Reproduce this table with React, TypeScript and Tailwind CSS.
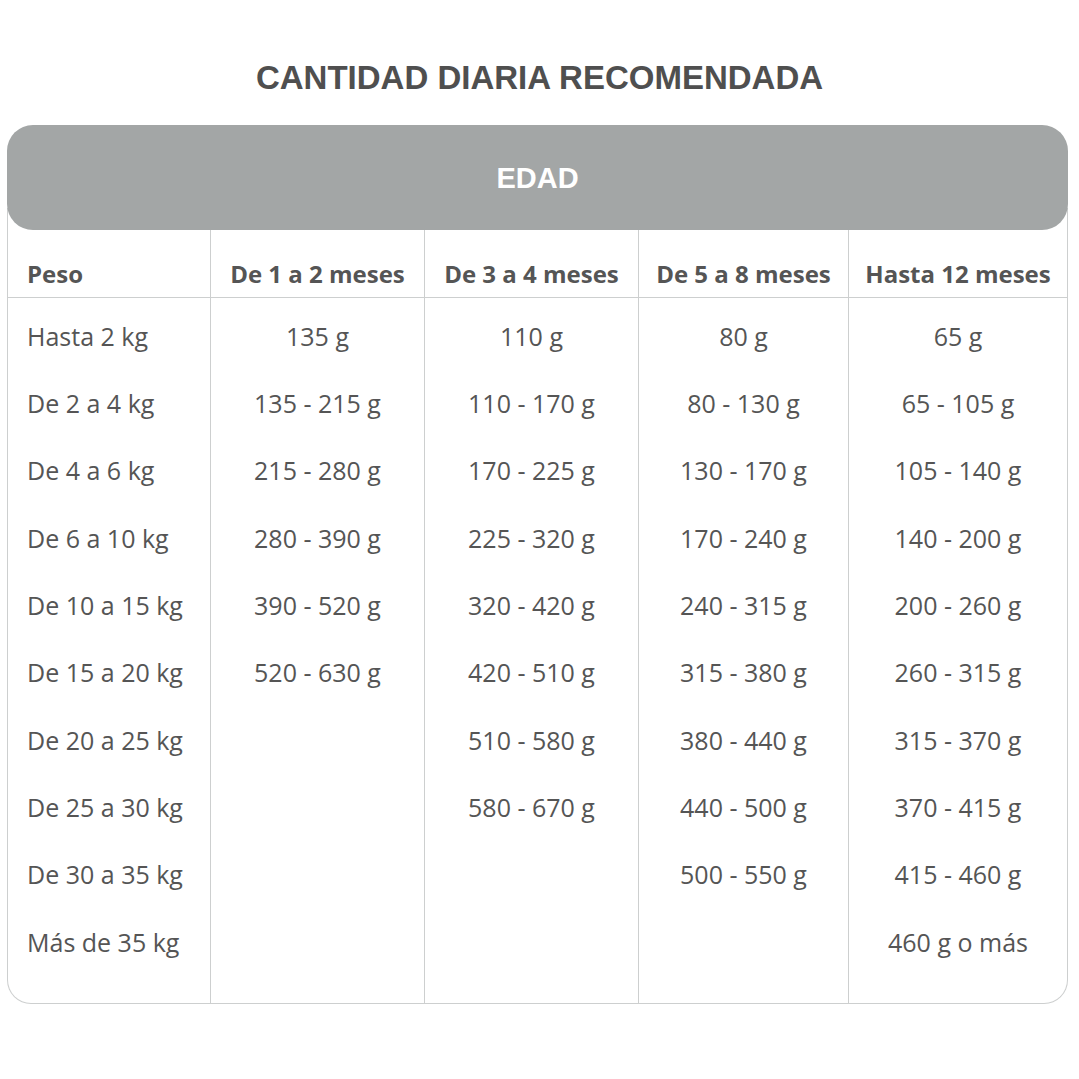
const headers = ['Peso', 'De 1 a 2 meses', 'De 3 a 4 meses', 'De 5 a 8 meses', 'Hasta 12 meses'];

const rows: string[][] = [
  ['Hasta 2 kg', '135 g', '110 g', '80 g', '65 g'],
  ['De 2 a 4 kg', '135 - 215 g', '110 - 170 g', '80 - 130 g', '65 - 105 g'],
  ['De 4 a 6 kg', '215 - 280 g', '170 - 225 g', '130 - 170 g', '105 - 140 g'],
  ['De 6 a 10 kg', '280 - 390 g', '225 - 320 g', '170 - 240 g', '140 - 200 g'],
  ['De 10 a 15 kg', '390 - 520 g', '320 - 420 g', '240 - 315 g', '200 - 260 g'],
  ['De 15 a 20 kg', '520 - 630 g', '420 - 510 g', '315 - 380 g', '260 - 315 g'],
  ['De 20 a 25 kg', '', '510 - 580 g', '380 - 440 g', '315 - 370 g'],
  ['De 25 a 30 kg', '', '580 - 670 g', '440 - 500 g', '370 - 415 g'],
  ['De 30 a 35 kg', '', '', '500 - 550 g', '415 - 460 g'],
  ['Más de 35 kg', '', '', '', '460 g o más'],
];

const widths = ['w-[202px]', 'w-[214px]', 'w-[214px]', 'w-[210px]', 'flex-1'];

export default function App() {
  return (
    <div className="w-[1079px] h-[1079px] bg-white pt-[57px]" style={{ fontFamily: '"Open Sans", "Noto Sans", sans-serif' }}>
      <h1 className="text-center text-[33px] leading-[42px] font-bold text-[#4f4f4f] font-['Liberation_Sans',Arial,sans-serif]">
        CANTIDAD DIARIA RECOMENDADA
      </h1>

      <div className="ml-[7px] w-[1061px] mt-[26px]">
        <div className="relative z-10 h-[105px] rounded-[26px] bg-[#a3a6a6] flex items-center justify-center pt-[2px]">
          <span className="text-white text-[29px] font-bold font-['Liberation_Sans',Arial,sans-serif]">EDAD</span>
        </div>

        <div className="-mt-[22px] flex border-x border-b border-[#cdcfcf] rounded-b-[24px] text-[#555555]">
          {headers.map((h, ci) => (
            <div key={h} className={`${widths[ci]} flex flex-col pt-[22px] ${ci > 0 ? 'border-l border-[#cdcfcf]' : ''}`}>
              <div
                className={`h-[68px] border-b border-[#cdcfcf] flex items-center pt-[20px] text-[24px] font-bold ${
                  ci === 0 ? 'pl-[19px]' : 'justify-center'
                }`}
              >
                {h}
              </div>
              <div className="pt-[5px] pb-[27px] text-[25px]">
                {rows.map((r) => (
                  <div
                    key={r[0]}
                    className={`h-[67.3px] flex items-center ${ci === 0 ? 'pl-[19px]' : 'justify-center'}`}
                  >
                    {r[ci]}
                  </div>
                ))}
              </div>
            </div>
          ))}
        </div>
      </div>
    </div>
  );
}
